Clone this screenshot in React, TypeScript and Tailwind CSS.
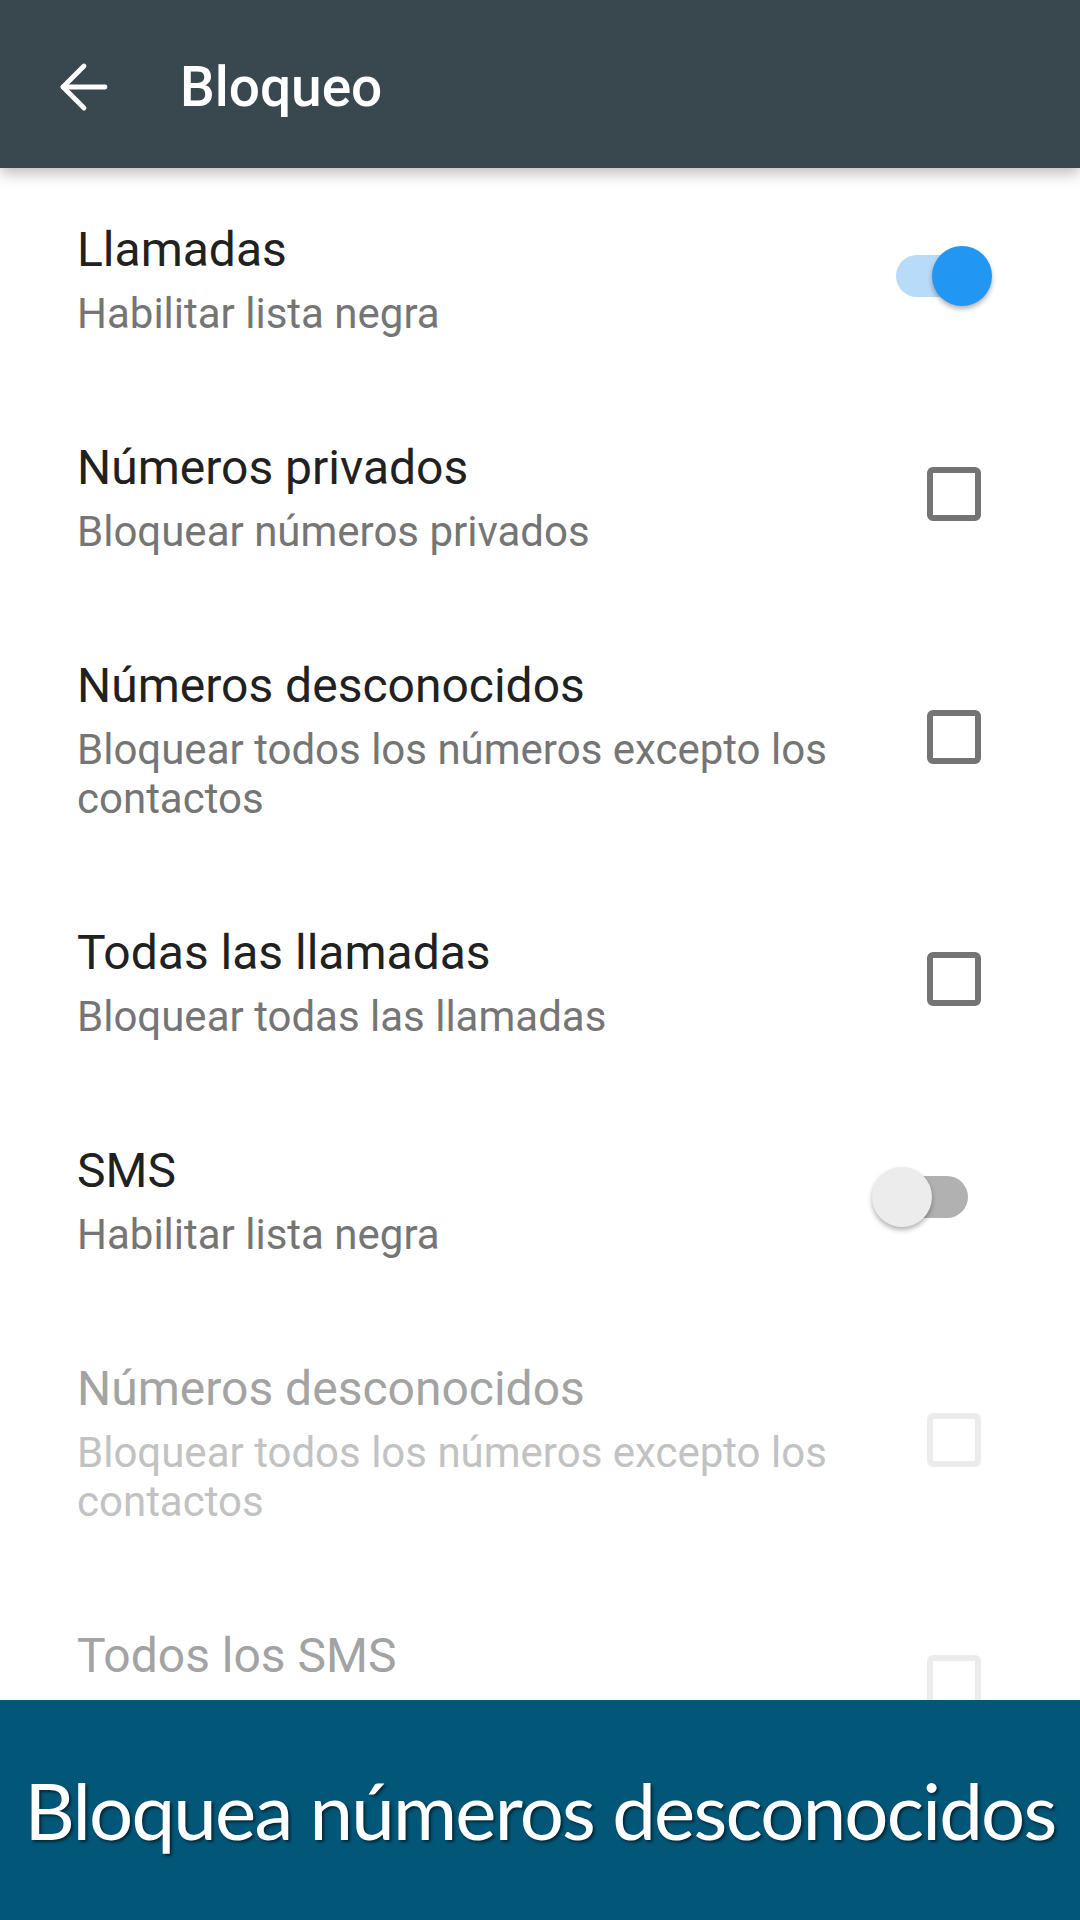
import { ArrowLeft } from 'lucide-react';

type Row = {
  title: string;
  summary: string;
  control: 'switch-on' | 'switch-off' | 'checkbox';
  disabled?: boolean;
};

const rows: Row[] = [
  { title: 'Llamadas', summary: 'Habilitar lista negra', control: 'switch-on' },
  { title: 'Números privados', summary: 'Bloquear números privados', control: 'checkbox' },
  { title: 'Números desconocidos', summary: 'Bloquear todos los números excepto los contactos', control: 'checkbox' },
  { title: 'Todas las llamadas', summary: 'Bloquear todas las llamadas', control: 'checkbox' },
  { title: 'SMS', summary: 'Habilitar lista negra', control: 'switch-off' },
  { title: 'Números desconocidos', summary: 'Bloquear todos los números excepto los contactos', control: 'checkbox', disabled: true },
  { title: 'Todos los SMS', summary: 'Bloquear todos los SMS', control: 'checkbox', disabled: true },
];

const Switch = ({ on }: { on: boolean }) => (
  <div className="relative w-[120px] h-[60px] -mr-[11px] mb-[8px] shrink-0">
    <div className={`absolute left-[24px] top-[9px] w-[72px] h-[42px] rounded-full ${on ? 'bg-[#b8dbf9]' : 'bg-[#b1b1b1]'}`} />
    {on ? (
      <div className="absolute right-0 top-0 w-[60px] h-[60px] rounded-full bg-[#2196f3] shadow-[0_3px_5px_rgba(0,0,0,0.3)]" />
    ) : (
      <div className="absolute left-0 top-0 w-[60px] h-[60px] rounded-full bg-[#ececec] shadow-[0_3px_5px_rgba(0,0,0,0.3)]" />
    )}
  </div>
);

const Checkbox = ({ disabled }: { disabled?: boolean }) => (
  <div
    className={`w-[54px] h-[54px] mb-[8px] shrink-0 rounded-[6px] border-[6px] ${disabled ? 'border-[#ececec]' : 'border-[#747474]'}`}
  />
);

const PrefRow = ({ row }: { row: Row }) => (
  <div className="flex items-center pl-[77px] pr-[99px] py-[51px]">
    <div className="flex-1 min-w-0 mr-[30px]">
      <div className={`text-[48px] leading-[56px] ${row.disabled ? 'text-[#a3a3a3]' : 'text-[#212121]'}`}>
        {row.title}
      </div>
      <div className={`mt-[11px] text-[42px] leading-[49px] ${row.disabled ? 'text-[#c2c2c2]' : 'text-[#757575]'}`}>
        {row.summary}
      </div>
    </div>
    {row.control === 'checkbox' ? (
      <Checkbox disabled={row.disabled} />
    ) : (
      <Switch on={row.control === 'switch-on'} />
    )}
  </div>
);

export default function App() {
  return (
    <div className="w-[1080px] h-[1920px] flex flex-col bg-white overflow-hidden font-['Roboto',sans-serif]">
      {/* toolbar */}
      <header className="relative z-10 h-[168px] shrink-0 bg-[#39474f] flex items-center pt-[6px] shadow-[0_5px_14px_rgba(0,0,0,0.28)]">
        <div className="w-[72px] h-[72px] ml-[48px] flex items-center justify-center text-white">
          <ArrowLeft size={72} strokeWidth={1.6} />
        </div>
        <h1 className="ml-[60px] text-[55px] font-medium text-white leading-none">Bloqueo</h1>
      </header>

      {/* preferences */}
      <main className="flex-1 min-h-0 overflow-hidden pt-[3px]">
        {rows.map((row, i) => (
          <PrefRow key={i} row={row} />
        ))}
      </main>

      {/* caption banner */}
      <footer className="h-[220px] shrink-0 bg-[#025677] flex items-center justify-center">
        <p className="font-['Lato',sans-serif] text-[78px] tracking-[-1.8px] text-white leading-none [text-shadow:2px_2px_3px_rgba(0,0,0,0.55)]">
          Bloquea números desconocidos
        </p>
      </footer>
    </div>
  );
}
